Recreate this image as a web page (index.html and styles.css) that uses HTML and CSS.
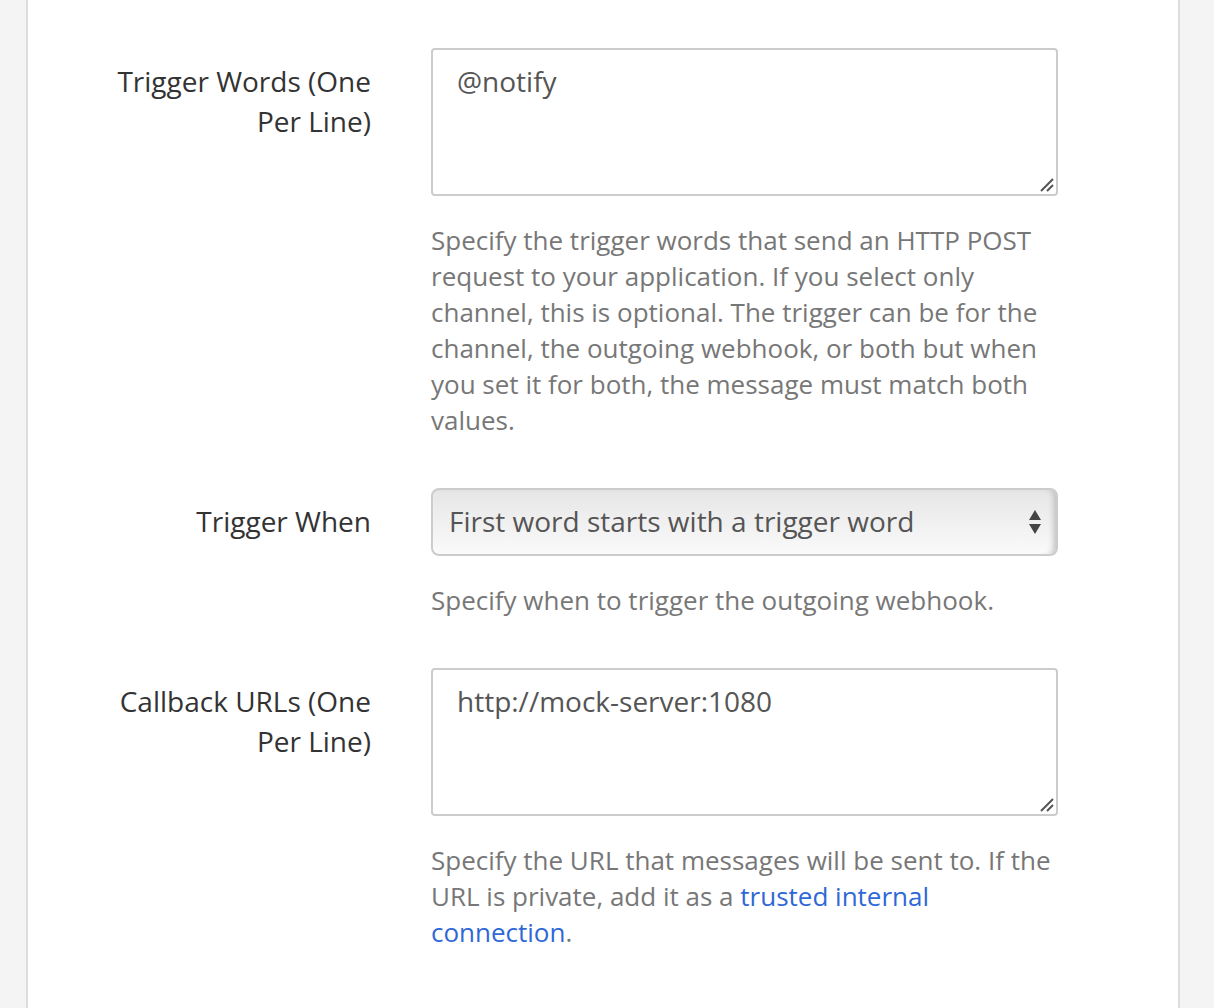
FILE: index.html
```html
<!DOCTYPE html>
<html>
<head>
<meta charset="utf-8">
<link rel="stylesheet" href="styles.css">
</head>
<body>
<div class="page">
  <div class="panel">
    <div class="form">
      <div class="row">
        <label class="label">Trigger Words (One Per Line)</label>
        <div class="field">
          <div class="textarea"><span class="value">@notify</span><svg class="grip" width="16" height="16" viewBox="0 0 16 16"><path d="M15 3L3 15M15 9L9 15" stroke="#555" stroke-width="2" fill="none"/></svg></div>
          <p class="help">Specify the trigger words that send an HTTP POST request to your application. If you select only channel, this is optional. The trigger can be for the channel, the outgoing webhook, or both but when you set it for both, the message must match both values.</p>
        </div>
      </div>
      <div class="row">
        <label class="label">Trigger When</label>
        <div class="field">
          <div class="select"><span class="value">First word starts with a trigger word</span><svg class="arrows" width="14" height="26" viewBox="0 0 14 26"><path d="M7 1L13 11H1Z M7 25L1 15H13Z" fill="#444"/></svg></div>
          <p class="help">Specify when to trigger the outgoing webhook.</p>
        </div>
      </div>
      <div class="row">
        <label class="label">Callback URLs (One Per Line)</label>
        <div class="field">
          <div class="textarea"><span class="value">http://mock-server:1080</span><svg class="grip" width="16" height="16" viewBox="0 0 16 16"><path d="M15 3L3 15M15 9L9 15" stroke="#555" stroke-width="2" fill="none"/></svg></div>
          <p class="help">Specify the URL that messages will be sent to. If the URL is private, add it as a <a class="link" href="#">trusted internal connection</a>.</p>
        </div>
      </div>
    </div>
  </div>
</div>
</body>
</html>
```
FILE: styles.css
```css
html, body {
  margin: 0;
  padding: 0;
  background: #f4f4f4;
}
body {
  font-family: "Open Sans", sans-serif;
  color: #333;
}
.page {
  height: 1008px;
  overflow: hidden;
  padding-left: 26px;
}
.panel {
  width: 1150px;
  height: 1008px;
  background: #fff;
  border-left: 2px solid #ddd;
  border-right: 2px solid #ddd;
}
.form {
  padding-top: 48px;
  display: flex;
  flex-direction: column;
}
.row {
  display: grid;
  grid-template-columns: 343px 627px;
  column-gap: 60px;
}
.label {
  text-align: right;
  font-size: 28px;
  line-height: 40px;
  padding-top: 13px;
  color: #333;
  padding-left: 60px;
}
.field {
  display: flex;
  flex-direction: column;
}
.textarea {
  position: relative;
  box-sizing: border-box;
  height: 148px;
  border: 2px solid #ccc;
  border-radius: 4px;
  padding: 11px 24px;
  font-size: 28px;
  line-height: 40px;
  color: #555;
}
.grip {
  position: absolute;
  right: 2px;
  bottom: 2px;
}
.select {
  position: relative;
  box-sizing: border-box;
  height: 68px;
  border: 2px solid #ccc;
  border-radius: 8px;
  padding: 11px 16px;
  font-size: 28px;
  line-height: 40px;
  color: #555;
  background: linear-gradient(#e6e6e6, #fafafa);
  box-shadow: inset -6px 0 6px -4px #bbb, inset 0 -3px 4px -2px #fff;
}
.arrows {
  position: absolute;
  right: 14px;
  top: 19px;
}
.help {
  margin: 26px 0 50px;
  font-size: 26px;
  line-height: 36px;
  color: #777;
}
.link {
  color: #2f68d6;
  text-decoration: none;
}
```
